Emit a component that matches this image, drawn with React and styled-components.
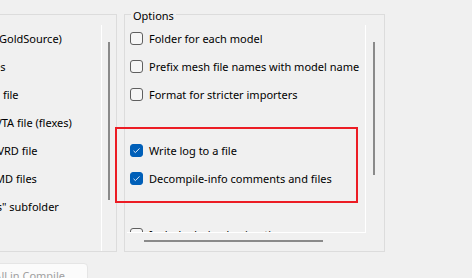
import React from 'react';
import styled, { createGlobalStyle } from 'styled-components';

const GlobalStyle = createGlobalStyle`
  html, body {
    margin: 0;
    padding: 0;
    background: #f0f0f0;
  }
  body {
    font-family: "Noto Sans", "Segoe UI", sans-serif;
    font-size: 11px;
    color: #000;
  }
`;

const Page = styled.div`
  position: relative;
  width: 472px;
  height: 278px;
  overflow: hidden;
  display: flex;
  flex-direction: column;
`;

const Panels = styled.div`
  display: flex;
  gap: 7px;
  margin-left: -121px;
  padding-top: 5px;
`;

const Group = styled.fieldset`
  margin: 0;
  padding: 1px 0 0 2px;
  border: 1px solid #dcdcdc;
  width: ${p => p.$width}px;
  box-sizing: border-box;
  min-width: 0;
`;

const Legend = styled.legend`
  margin-left: 4px;
  padding: 3px 2px 0;
  line-height: 16px;
  height: 19px;
  box-sizing: border-box;
`;

const Scroller = styled.div`
  display: grid;
  grid-template-columns: ${p => p.$viewWidth}px ${p => p.$trackWidth}px;
  grid-template-rows: ${p => (p.$hscroll ? '208px 18px' : '226px')};
`;

const Viewport = styled.div`
  overflow: hidden;
  border-right: 1px solid #fff;
  border-bottom: ${p => (p.$hscroll ? '1px solid #fff' : 'none')};
  box-sizing: border-box;
  padding-left: 3px;
`;

const VTrack = styled.div`
  display: flex;
  padding-left: ${p => p.$offset}px;
  padding-top: 17px;
`;

const VThumb = styled.div`
  width: 2px;
  height: ${p => p.$length}px;
  background: #8a8a8a;
`;

const HTrack = styled.div`
  grid-column: 1 / span 2;
  padding: 7px 0 0 17px;
`;

const HThumb = styled.div`
  height: 2px;
  width: ${p => p.$length}px;
  background: #8a8a8a;
`;

const Row = styled.label`
  display: flex;
  align-items: center;
  gap: 6px;
  height: 26px;
  margin-bottom: 2px;
  padding-left: ${p => p.$indent || 0}px;
  white-space: nowrap;
`;

const Box = styled.span`
  flex: none;
  width: 13px;
  height: 13px;
  box-sizing: border-box;
  border-radius: 3px;
  border: 1px solid ${p => (p.$checked ? '#005fb8' : '#5f5f5f')};
  background: ${p => (p.$checked ? '#005fb8' : '#f6f6f6')};
  display: flex;
  align-items: center;
  justify-content: center;
`;

const Highlight = styled.div`
  position: absolute;
  left: 115px;
  top: 127px;
  width: 243px;
  height: 76px;
  box-sizing: border-box;
  border: 2px solid #ec1c24;
  pointer-events: none;
`;

const Footer = styled.div`
  display: flex;
  padding-top: 11px;
`;

const Button = styled.button`
  margin-left: -51px;
  height: 24px;
  padding: 0 22px;
  border: 1px solid #e5e5e5;
  border-radius: 4px;
  background: #fbfbfb;
  color: #a0a0a0;
  font: inherit;
`;

function Check({ checked }) {
  return (
    <Box $checked={checked}>
      {checked && (
        <svg width="9" height="9" viewBox="0 0 9 9">
          <path d="M1.5 4.8 L3.4 6.6 L7.5 2.4" fill="none" stroke="#dbe8f7" strokeWidth="1" />
        </svg>
      )}
    </Box>
  );
}

const leftItems = [
  { text: 'Texture BMP files (GoldSource)' },
  { text: 'Group into QCI files' },
  { text: 'Physics mesh SMD file' },
  { text: 'Vertex animation VTA file (flexes)' },
  { text: 'Procedural bones VRD file' },
  { text: 'Bone animation SMD files' },
  { text: 'Place in "anims" subfolder', indent: 20 },
];

const options = [
  { text: 'Folder for each model' },
  { text: 'Prefix mesh file names with model name' },
  { text: 'Format for stricter importers' },
  { text: '', hidden: true },
  { text: 'Write log to a file', checked: true },
  { text: 'Decompile-info comments and files', checked: true },
  { text: '', hidden: true },
  { text: 'Include derived animations' },
];

export default function App() {
  return (
    <Page>
      <GlobalStyle />
      <Panels>
        <Group $width={238}>
          <Legend>Output</Legend>
          <Scroller $viewWidth={220} $trackWidth={17}>
            <Viewport>
              {leftItems.map(item => (
                <Row key={item.text} $indent={item.indent}>
                  <Check checked />
                  {item.text}
                </Row>
              ))}
            </Viewport>
            <VTrack $offset={6}>
              <VThumb $length={158} />
            </VTrack>
          </Scroller>
        </Group>
        <Group $width={261}>
          <Legend>Options</Legend>
          <Scroller $viewWidth={239} $trackWidth={18} $hscroll>
            <Viewport $hscroll>
              {options.map((item, i) =>
                item.hidden ? (
                  <Row key={i} />
                ) : (
                  <Row key={i}>
                    <Check checked={item.checked} />
                    {item.text}
                  </Row>
                )
              )}
            </Viewport>
            <VTrack $offset={7}>
              <VThumb $length={133} />
            </VTrack>
            <HTrack>
              <HThumb $length={179} />
            </HTrack>
          </Scroller>
        </Group>
      </Panels>
      <Footer>
        <Button disabled>Use All in Compile</Button>
      </Footer>
      <Highlight />
    </Page>
  );
}
